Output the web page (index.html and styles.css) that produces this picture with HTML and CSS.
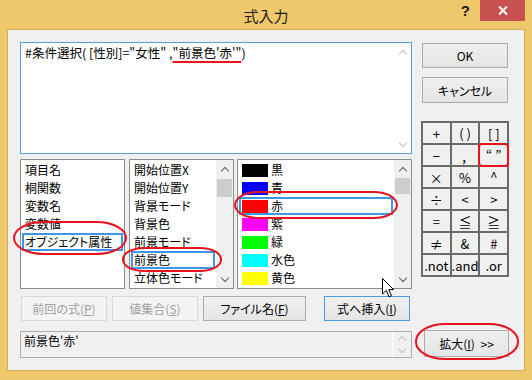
FILE: index.html
```html
<!DOCTYPE html>
<html lang="ja">
<head>
    <meta charset="UTF-8">
    <title>式入力</title>
    <link rel="stylesheet" href="styles.css">
</head>
<body>
    <div class="frame">
        <div class="titlebar">
            <span class="title">式入力</span>
            <div class="caption-btns">
                <span class="help">?</span>
                <span class="close">
                    <svg width="10" height="9" viewBox="0 0 10 9"><path d="M1 0.5 L9 8.5 M9 0.5 L1 8.5" stroke="#fff" stroke-width="2"/></svg>
                </span>
            </div>
        </div>

        <div class="client">
            <div class="main">
                <div class="left">
                    <div class="expr">
                        <div class="expr-text">#条件選択( [性別]="女性" ,<span class="mark">"前景色'赤'"</span>)</div>
                        <div class="vscroll faint">
                            <span class="arr"><i class="up"></i></span>
                            <span class="arr"><i class="down"></i></span>
                        </div>
                    </div>

                    <div class="lists">
                        <div class="list l1">
                            <ul class="items">
                                <li>項目名</li>
                                <li>桐関数</li>
                                <li>変数名</li>
                                <li>変数値</li>
                                <li class="sel">オブジェクト属性</li>
                            </ul>
                        </div>
                        <div class="list l2">
                            <ul class="items">
                                <li>開始位置X</li>
                                <li>開始位置Y</li>
                                <li>背景モード</li>
                                <li>背景色</li>
                                <li>前景モード</li>
                                <li class="sel">前景色</li>
                                <li>立体色モード</li>
                            </ul>
                            <div class="vscroll track">
                                <span class="arr"><i class="up"></i></span>
                                <span class="thumb"></span>
                                <span class="arr"><i class="down"></i></span>
                            </div>
                        </div>
                        <div class="list l3">
                            <ul class="items colors">
                                <li><b class="sw" style="background:#000000"></b>黒</li>
                                <li><b class="sw" style="background:#0000ff"></b>青</li>
                                <li class="sel"><b class="sw" style="background:#ff0000"></b>赤</li>
                                <li><b class="sw" style="background:#ff00ff"></b>紫</li>
                                <li><b class="sw" style="background:#00ff00"></b>緑</li>
                                <li><b class="sw" style="background:#00ffff"></b>水色</li>
                                <li><b class="sw" style="background:#ffff00"></b>黄色</li>
                            </ul>
                            <div class="vscroll track">
                                <span class="arr"><i class="up"></i></span>
                                <span class="thumb short"></span>
                                <span class="arr"><i class="down"></i></span>
                            </div>
                        </div>
                    </div>

                    <div class="btnrow">
                        <button class="btn off w86">前回の式(<u>P</u>)</button>
                        <button class="btn off w86">値集合(<u>S</u>)</button>
                        <button class="btn w103">ファイル名(<u>F</u>)</button>
                        <button class="btn focus w86 push">式へ挿入(<u>I</u>)</button>
                    </div>

                    <div class="result">
                        <div class="result-text">前景色'赤'</div>
                        <div class="vscroll faint split">
                            <span class="arr"><i class="up"></i></span>
                            <span class="arr"><i class="down"></i></span>
                        </div>
                    </div>
                </div>

                <div class="right">
                    <button class="btn ok">OK</button>
                    <button class="btn cancel">キャンセル</button>
                    <div class="ops">
                        <span>+</span><span>( )</span><span>[ ]</span>
                        <span>−</span><span class="low">，</span><span class="hl top">“ ”</span>
                        <span>×</span><span>%</span><span class="top">^</span>
                        <span>÷</span><span>&lt;</span><span>&gt;</span>
                        <span>=</span><span>≦</span><span>≧</span>
                        <span>≠</span><span>&amp;</span><span>#</span>
                        <span>.not</span><span>.and</span><span>.or</span>
                    </div>
                    <button class="btn expand">拡大(<u>I</u>) &gt;&gt;</button>
                </div>
            </div>

            <!-- annotation marks -->
            <span class="ring r1"></span>
            <span class="ring r2"></span>
            <span class="ring r3"></span>
            <span class="ring r4"></span>

            <svg class="cursor" width="13" height="20" viewBox="0 0 13 20">
                <path d="M0.5 0.5 V16 L4.3 12.3 L7 18.8 L9.4 17.8 L6.8 11.6 H11.6 Z" fill="#fff" stroke="#000" stroke-width="1" stroke-linejoin="miter"/>
            </svg>
        </div>
    </div>
</body>
</html>
```

FILE: styles.css
```css
* {
    box-sizing: border-box;
}
body {
    margin: 0;
    font-family: "Noto Sans CJK JP", sans-serif;
    font-size: 12px;
    font-feature-settings: "palt";
    color: #000;
}
.frame {
    width: 532px;
    height: 380px;
    background-color: #f0c86c;
    display: flex;
    flex-direction: column;
}
.titlebar {
    height: 29px;
    display: grid;
    grid-template-columns: 1fr auto 1fr;
}
.title {
    grid-column: 2;
    font-size: 15px;
    line-height: 20px;
    padding-top: 6px;
    color: #1e1e1e;
}
.caption-btns {
    grid-column: 3;
    display: flex;
    justify-content: flex-end;
    align-items: flex-start;
    padding-right: 7px;
}
.help {
    font-family: "Liberation Sans", sans-serif;
    font-weight: bold;
    font-size: 15px;
    line-height: 16px;
    margin: 3px 10px 0 0;
    color: #222;
}
.close {
    width: 45px;
    height: 21px;
    background-color: #c75050;
    display: flex;
    align-items: center;
    justify-content: center;
}
.client {
    flex: 1;
    margin: 0 7px 9px;
    background-color: #f0f0f0;
    border: 1px solid #d3ad5e;
    padding: 12px 15px 0 12px;
    position: relative;
}
.main {
    display: flex;
    gap: 9px;
}
.left {
    width: 392px;
    display: flex;
    flex-direction: column;
}
.right {
    width: 88px;
    display: flex;
    flex-direction: column;
}

/* expression box */
.expr {
    height: 112px;
    border: 1px solid #569de5;
    background-color: #fff;
    display: flex;
}
.expr-text {
    flex: 1;
    font-size: 12.5px;
    line-height: 18px;
    padding: 1px 4px;
    white-space: pre;
}
.mark {
    text-decoration: underline;
    text-decoration-color: #e8131c;
    text-decoration-thickness: 2px;
    text-underline-offset: 3px;
}

/* scroll bars */
.vscroll {
    width: 17px;
    display: flex;
    flex-direction: column;
    justify-content: space-between;
}
.vscroll.track {
    background-color: #f0f0f0;
}
.vscroll.split {
    width: 19px;
    border-left: 1px solid #fff;
}
.arr {
    height: 17px;
    display: flex;
    align-items: center;
    justify-content: center;
}
.split .arr {
    height: 12px;
}
.arr i {
    width: 6px;
    height: 6px;
    border-left: 1.5px solid #606060;
    border-top: 1.5px solid #606060;
}
.arr .up {
    transform: rotate(45deg);
    margin-top: 4px;
}
.arr .down {
    transform: rotate(225deg);
    margin-bottom: 4px;
}
.faint .arr i {
    border-color: #c4c4c4;
}
.thumb {
    height: 18px;
    margin: 2px 1px 0;
    background-color: #cdcdcd;
}
.thumb.short {
    height: 16px;
    margin-top: 1px;
}
.vscroll.track .arr:last-child {
    margin-top: auto;
}

/* lists */
.lists {
    display: flex;
    height: 130px;
    margin-top: 5px;
}
.list {
    height: 130px;
    border: 1px solid #8c8c8c;
    background-color: #fff;
    display: flex;
    overflow: hidden;
}
.l1 {
    width: 105px;
}
.l2 {
    width: 105px;
    margin-left: 4px;
}
.l3 {
    width: 175px;
    margin-left: 3px;
}
.items {
    flex: 1;
    list-style: none;
    margin: 0;
    padding: 1px 0 0;
}
.items li {
    height: 18px;
    line-height: 18px;
    padding-left: 3px;
    margin: 0 1px;
    white-space: nowrap;
}
.items li.sel {
    box-shadow: inset 0 0 0 2px #3d97e8;
}
.colors li {
    display: flex;
    align-items: center;
    gap: 3px;
}
.sw {
    width: 26px;
    height: 13px;
}

/* buttons */
.btn {
    font: inherit;
    font-feature-settings: "palt";
    color: #000;
    height: 25px;
    padding: 0;
    border: 1px solid #acacac;
    background: linear-gradient(#f0f0f0, #e5e5e5);
    display: flex;
    align-items: center;
    justify-content: center;
}
.btn.off {
    color: #a0a0a0;
    border-color: #d9d9d9;
    background: #f4f4f4;
}
.btn.focus {
    border-color: #4c9be8;
}
.btnrow {
    display: flex;
    gap: 5px;
    margin-top: 7px;
    padding-left: 1px;
}
.w86 {
    width: 86px;
}
.w103 {
    width: 103px;
}
.btnrow .push {
    margin-left: 13px;
}
.ok {
    width: 86px;
    margin: 1px 0 0 1px;
}
.cancel {
    width: 86px;
    height: 26px;
    margin: 9px 0 0 1px;
}
.expand {
    width: 85px;
    height: 27px;
    margin: 53px 0 0 3px;
    word-spacing: 3px;
}

/* operator pad */
.ops {
    margin-top: 18px;
    display: grid;
    grid-template-columns: repeat(3, 1fr);
    grid-auto-rows: 20px;
    gap: 2px;
    padding: 2px;
    background-color: #6b6b6b;
}
.ops span {
    background-color: #f0f0f0;
    display: flex;
    align-items: center;
    justify-content: center;
    font-size: 13px;
    line-height: 1;
    white-space: pre;
}
.ops .top {
    align-items: flex-start;
    padding-top: 3px;
}
.ops .low {
    align-items: flex-end;
    padding-bottom: 2px;
}
.ops .hl {
    position: relative;
    z-index: 1;
    border-radius: 2px;
    box-shadow: 0 0 0 2px #e8131c;
}

/* bottom text */
.result {
    height: 27px;
    margin-top: 10px;
    border: 1px solid #abadb3;
    background-color: #f0f0f0;
    display: flex;
}
.result-text {
    flex: 1;
    line-height: 17px;
    padding: 0 3px;
}

/* annotations */
.ring {
    position: absolute;
    border: 2.5px solid #e8131c;
}
.r1 {
    left: 5px;
    top: 191px;
    width: 114px;
    height: 34px;
    border-radius: 30px / 17px;
}
.r2 {
    left: 114px;
    top: 217px;
    width: 100px;
    height: 25px;
    border-radius: 22px / 12px;
}
.r3 {
    left: 226px;
    top: 161px;
    width: 164px;
    height: 28px;
    border-radius: 24px / 14px;
}
.r4 {
    left: 407px;
    top: 293px;
    width: 104px;
    height: 37px;
    border-radius: 30px / 18px;
}
.cursor {
    position: absolute;
    left: 374px;
    top: 248px;
}
```
